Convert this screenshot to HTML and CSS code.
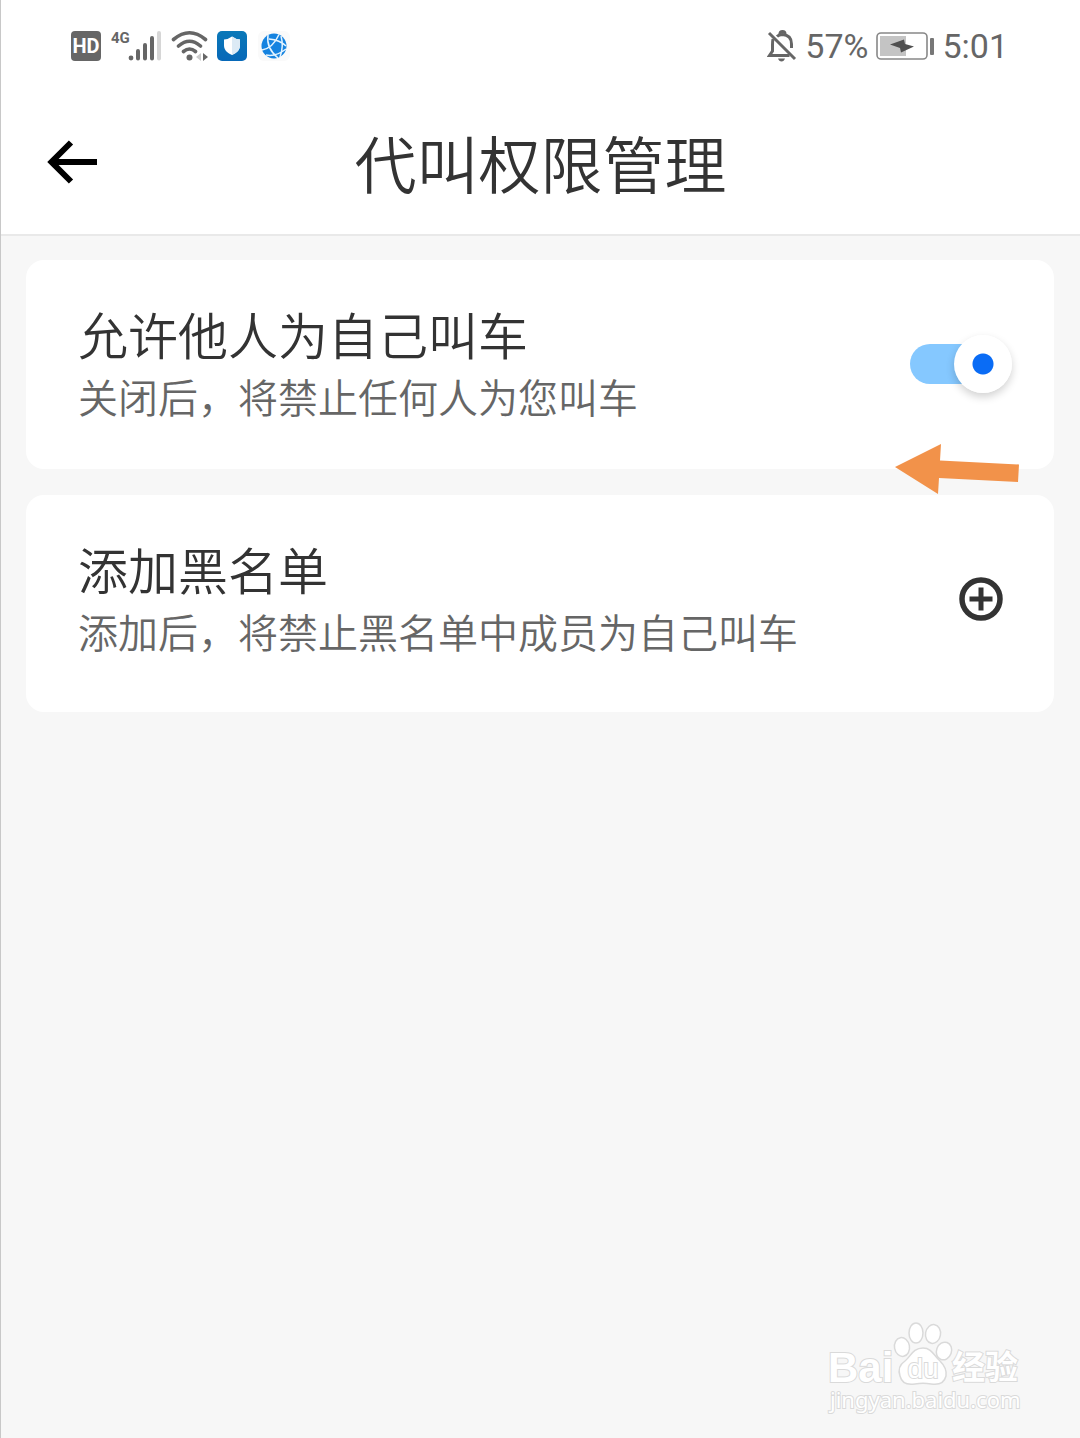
FILE: index.html
```html
<!DOCTYPE html>
<html lang="zh-CN">
<head>
<meta charset="utf-8">
<meta name="viewport" content="width=device-width, initial-scale=1">
<title>代叫权限管理</title>
<link rel="stylesheet" href="styles.css">
</head>
<body>
<div class="screen">
  <div class="status-bar">
    <div class="status-left">
      <svg width="30" height="30" viewBox="0 0 30 30" aria-hidden="true">
        <rect width="30" height="30" rx="4" fill="#666"/>
        <text x="15" y="22" text-anchor="middle" class="badge-text">HD</text>
      </svg>
      <svg width="52" height="34" viewBox="0 0 52 34" aria-hidden="true">
        <text x="1" y="14" class="net-text">4G</text>
        <circle cx="21" cy="29" r="2.4" fill="#666"/>
        <g stroke="#666" stroke-width="4" stroke-linecap="round">
          <path d="M28 22v7.500M35 16v13.500M42 9v20.500"/>
          <path d="M49 4v25.500" stroke="#d6d6d6"/>
        </g>
      </svg>
      <svg width="37" height="34" viewBox="0 0 37 34" aria-hidden="true">
        <g fill="none" stroke="#666" stroke-width="3.600" stroke-linecap="round">
          <path d="M2.500 10.500Q18.500 -3 34.500 10.500M7.500 17Q18.500 7.500 29.500 17M12.500 22.500Q18.500 17.500 24.500 22.500"/>
        </g>
        <circle cx="18.500" cy="28.500" r="3" fill="#666"/>
        <path d="M30 24v8l-5-4z" fill="#ccc"/>
        <path d="M32 24v8l5-4z" fill="#666"/>
      </svg>
      <svg width="30" height="30" viewBox="0 0 30 30" aria-hidden="true">
        <defs><linearGradient id="shieldBg" x2="0" y2="1"><stop stop-color="#0a78b8"/><stop offset="1" stop-color="#0768b8"/></linearGradient></defs>
        <rect width="30" height="30" rx="5" fill="url(#shieldBg)"/>
        <path d="M15 5.500q4 3 8 3v6c0 5-4 7.500-8 9.500-4-2-8-4.500-8-9.500v-6q4 0 8-3z" fill="#fff"/>
        <path d="M15 5.500q4 3 8 3v6c0 5-4 7.500-8 9.500z" fill="#dceaf5"/>
      </svg>
      <svg width="34" height="30" viewBox="0 0 34 30" aria-hidden="true">
        <rect x="2" width="32" height="30" rx="6" fill="#fafafa"/>
        <circle cx="18" cy="15" r="12.500" fill="#1583e0"/>
        <path d="M12 4Q10 17 22 27M6 19Q17 17 23 3.500M13 8Q24 9 30 15M10 24Q20 26 30 18M25 5Q28 15 24 26" fill="none" stroke="#e4f4ff" stroke-width="1.500"/>
      </svg>
    </div>
    <div class="status-right">
      <svg width="30" height="32" viewBox="0 0 30 32" aria-hidden="true">
        <g fill="none" stroke="#666" stroke-width="3">
          <path d="M10 6.500Q12 4.500 15.500 4.500Q24.500 5 24.500 14v4M6 9Q5.500 11 5.500 15v6l-3 4.500h20"/>
          <path d="M2 3l26 26"/>
          <path d="M13 4q0-2.500 2.500-2.500t2.500 2.500"/>
        </g>
        <path d="M11 28.500h7q-1 3-3.500 3t-3.500-3z" fill="#666"/>
      </svg>
      <span class="battery-level">57%</span>
      <svg width="58" height="28" viewBox="0 0 58 28" aria-hidden="true">
        <rect x="1" y="1" width="50" height="26" rx="4" fill="none" stroke="#888" stroke-width="1.600"/>
        <rect x="4" y="4" width="26" height="20" fill="#c4c4c4"/>
        <path d="M14 12.500l14-5 1 4.500 9 2.500-13 6-1-4.500z" fill="#505050"/>
        <rect x="54" y="6" width="4" height="17" rx="1" fill="#777"/>
      </svg>
      <span class="clock">5:01</span>
    </div>
  </div>

  <header class="nav-bar">
    <button class="back" type="button" aria-label="返回">
      <svg width="50" height="44" viewBox="0 0 50 44" aria-hidden="true">
        <path d="M24 2.500L4.500 22l19.500 19.500M6 22h44" fill="none" stroke="#000" stroke-width="6"/>
      </svg>
    </button>
    <h1 class="page-title">代叫权限管理</h1>
  </header>

  <main class="cards">
    <section class="card">
      <div class="card-text">
        <label class="card-title" for="allow">允许他人为自己叫车</label>
        <p class="card-note">关闭后，将禁止任何人为您叫车</p>
      </div>
      <input class="toggle" id="allow" type="checkbox" role="switch" checked>
      <svg class="pointer" width="124" height="52" viewBox="0 0 124 52" aria-hidden="true">
        <path d="M0 24L46 1l-1 16.500 79 4-1 17.500-79-4-1 16z" fill="#f2924a"/>
      </svg>
    </section>
    <section class="card card-tall">
      <div class="card-text">
        <h2 class="card-title">添加黑名单</h2>
        <p class="card-note">添加后，将禁止黑名单中成员为自己叫车</p>
      </div>
      <button class="add" type="button" aria-label="添加黑名单">
        <svg width="44" height="44" viewBox="0 0 44 44" aria-hidden="true">
          <circle cx="22" cy="22" r="19" fill="none" stroke="#333" stroke-width="5.500"/>
          <path d="M22 10.500v23M10.500 22h23" stroke="#333" stroke-width="5"/>
        </svg>
      </button>
    </section>
  </main>

  <svg class="watermark" width="200" height="96" viewBox="0 0 200 96" role="img" aria-label="Baidu 经验">
    <g fill="#fff" stroke="#dadada" stroke-width="1.500">
      <ellipse cx="76" cy="26" rx="7.500" ry="9.500" transform="rotate(-10 76 26)"/>
      <ellipse cx="90" cy="12" rx="7" ry="10"/>
      <ellipse cx="107" cy="13" rx="7.500" ry="9.500" transform="rotate(10 107 13)"/>
      <ellipse cx="118" cy="30" rx="7.500" ry="9" transform="rotate(20 118 30)"/>
      <path d="M97 27c-10 0-12 8-18 13-6 4-7 9-5 15 2 8 9 9 15 8 6-1 10-1 16 0 6 1 13 0 15-8 1-6-1-10-6-15-6-5-8-13-17-13z"/>
    </g>
    <text x="2" y="61" class="mark-text mark-latin">Bai</text>
    <text x="97" y="57" text-anchor="middle" class="mark-text mark-du">du</text>
    <text x="126" y="58" class="mark-text mark-han">经验</text>
    <text x="4" y="87" class="mark-text mark-url">jingyan.baidu.com</text>
  </svg>
</div>
</body>
</html>
```

FILE: styles.css
```css
* {
  box-sizing: border-box;
}

body {
  margin: 0;
  background: #f7f7f7;
  color: #333;
  font-family: "Noto Sans CJK SC", sans-serif;
  font-weight: 350;
}

h1,
h2,
p {
  margin: 0;
  font-weight: inherit;
}

button {
  padding: 0;
  border: 0;
  background: none;
  cursor: pointer;
}

svg {
  display: block;
  flex: none;
}

.screen {
  position: relative;
  min-height: 100vh;
  border-left: 1px solid #c8c8c8;
}

.status-bar {
  display: flex;
  align-items: center;
  justify-content: space-between;
  height: 92px;
  padding: 0 72px 0 70px;
  background: #fff;
  color: #666;
  font-family: Roboto, sans-serif;
  font-size: 34px;
  font-weight: 400;
}

.status-left,
.status-right {
  display: flex;
  align-items: center;
  gap: 9px;
}

.status-right {
  gap: 8px;
}

.badge-text {
  fill: #fff;
  font: 700 20px Roboto, sans-serif;
}

.net-text {
  fill: #666;
  font: 700 15px Roboto, sans-serif;
}

.nav-bar {
  display: grid;
  grid-template-columns: 1fr auto 1fr;
  align-items: center;
  height: 144px;
  padding: 0 46px 3px;
  border-bottom: 2px solid #e9e9e9;
  background: #fff;
}

.back {
  justify-self: start;
}

.page-title {
  font-size: 62px;
  line-height: 84px;
}

.cards {
  display: grid;
  gap: 26px;
  padding: 24px 26px 24px 25px;
}

.card {
  position: relative;
  display: flex;
  align-items: center;
  justify-content: space-between;
  padding: 41px 42px 42px 52px;
  border-radius: 18px;
  background: #fff;
}

.card-tall {
  padding-bottom: 50px;
}

.card-title {
  display: block;
  font-size: 50px;
  line-height: 64px;
}

.card-note {
  color: #666;
  font-size: 40px;
  line-height: 62px;
}

.toggle {
  display: grid;
  flex: none;
  align-items: center;
  width: 102px;
  height: 58px;
  margin: 0;
  appearance: none;
  cursor: pointer;
}

.toggle::before,
.toggle::after {
  grid-area: 1 / 1;
  content: "";
}

.toggle::before {
  width: 84px;
  height: 40px;
  border-radius: 20px;
  background: #ddd;
}

.toggle::after {
  width: 58px;
  height: 58px;
  border-radius: 50%;
  background: radial-gradient(circle, #999 10px, #fff 11px);
  box-shadow: 0 4px 8px rgba(0, 0, 0, 0.18);
}

.toggle:checked::before {
  background: #85c8ff;
}

.toggle:checked::after {
  justify-self: end;
  background: radial-gradient(circle, #0a6cf5 10px, #fff 11px);
}

.pointer {
  position: absolute;
  right: 35px;
  bottom: -26px;
}

.add {
  display: grid;
  flex: none;
  place-items: center;
  width: 62px;
  height: 62px;
}

.watermark {
  position: absolute;
  right: 54px;
  bottom: 21px;
}

.mark-text {
  fill: #fff;
  stroke: #dadada;
  stroke-width: 2px;
  paint-order: stroke;
}

.mark-latin {
  font: 700 42px "Liberation Sans", sans-serif;
}

.mark-du {
  font: 400 28px "Liberation Sans", sans-serif;
}

.mark-han {
  font: 700 33px "Noto Sans CJK SC", sans-serif;
}

.mark-url {
  font: 400 22px "Noto Sans", sans-serif;
}
```
